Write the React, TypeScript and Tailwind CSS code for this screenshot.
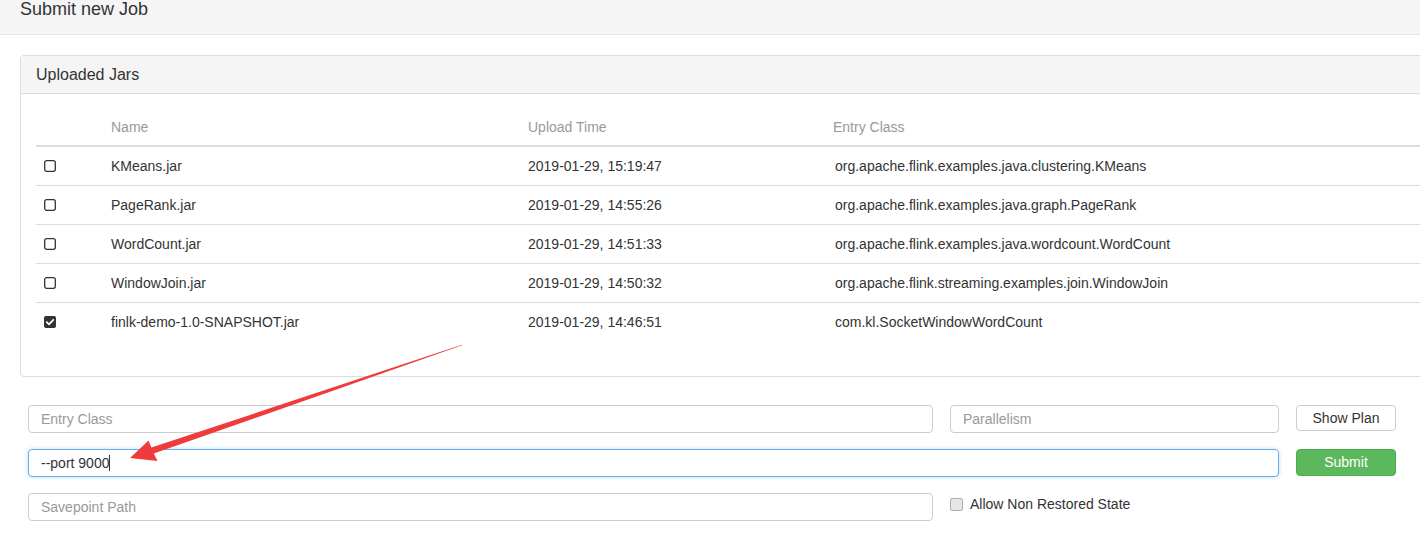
import React from 'react';

const jars = [
  { name: 'KMeans.jar', time: '2019-01-29, 15:19:47', entry: 'org.apache.flink.examples.java.clustering.KMeans', checked: false },
  { name: 'PageRank.jar', time: '2019-01-29, 14:55:26', entry: 'org.apache.flink.examples.java.graph.PageRank', checked: false },
  { name: 'WordCount.jar', time: '2019-01-29, 14:51:33', entry: 'org.apache.flink.examples.java.wordcount.WordCount', checked: false },
  { name: 'WindowJoin.jar', time: '2019-01-29, 14:50:32', entry: 'org.apache.flink.streaming.examples.join.WindowJoin', checked: false },
  { name: 'finlk-demo-1.0-SNAPSHOT.jar', time: '2019-01-29, 14:46:51', entry: 'com.kl.SocketWindowWordCount', checked: true },
];

function SquareCheck({ checked }: { checked: boolean }) {
  if (checked) {
    return (
      <svg width="12" height="12" viewBox="0 0 12 12" className="block">
        <rect x="0" y="0" width="12" height="12" rx="2" fill="#333" />
        <path d="M2.8 6.2 L5 8.3 L9.3 3.9" stroke="#fff" strokeWidth="1.8" fill="none" strokeLinecap="round" strokeLinejoin="round" />
      </svg>
    );
  }
  return (
    <svg width="12" height="12" viewBox="0 0 12 12" className="block">
      <rect x="0.7" y="0.7" width="10.6" height="10.6" rx="2" fill="none" stroke="#333" strokeWidth="1.3" />
    </svg>
  );
}

function Arrow() {
  return (
    <svg className="absolute left-0 top-0 pointer-events-none" width="1420" height="557">
      <polygon
        points="130,458 148.5,440.5 151.4,447.6 461.9,344.7 462.1,345.3 153.8,453.6 157.5,461"
        fill="#ef3b3b"
      />
    </svg>
  );
}

export default function App() {
  return (
    <div className="relative w-[1420px] h-[557px] overflow-hidden bg-white text-[#333] text-[14px] font-['Liberation_Sans',Arial,sans-serif]">
      <div className="h-[35px] bg-[#f5f5f5] border-b border-[#e7e7e7] pl-5">
        <div className="text-[18px] leading-[18px]">Submit new Job</div>
      </div>

      <div className="ml-5 mt-5 w-[1420px] border border-[#ddd] rounded-[4px]">
        <div className="h-[38px] bg-[#f5f5f5] border-b border-[#ddd] flex items-center pl-[15px] text-[16px]">
          Uploaded Jars
        </div>
        <div className="px-[15px] pt-[15px] pb-[35px]">
          <div className="grid grid-cols-[67px_417px_305px_1fr] h-[38px] items-center border-b-2 border-[#ddd] text-[#999] leading-5">
            <div />
            <div className="pl-2">Name</div>
            <div className="pl-2">Upload Time</div>
            <div className="pl-2">Entry Class</div>
          </div>
          {jars.map((j, i) => (
            <div
              key={j.name}
              className={
                'grid grid-cols-[67px_417px_305px_1fr] items-center leading-5 ' +
                (i === 0 ? 'h-[38px]' : 'h-[39px] border-t border-[#ddd]')
              }
            >
              <div className="pl-2">
                <SquareCheck checked={j.checked} />
              </div>
              <div className="pl-2">{j.name}</div>
              <div className="pl-2">{j.time}</div>
              <div className="pl-[10px]">{j.entry}</div>
            </div>
          ))}
        </div>
      </div>

      <div className="ml-[28px] mt-[28px] w-[1368px] flex flex-col gap-4">
        <div className="flex gap-[17px] items-start">
          <div className="w-[905px] h-[28px] border border-[#ccc] rounded-[4px] flex items-center pl-3 text-[#999]">
            Entry Class
          </div>
          <div className="w-[329px] h-[28px] border border-[#ccc] rounded-[4px] flex items-center pl-3 text-[#999]">
            Parallelism
          </div>
          <button className="w-[100px] h-[26px] border border-[#ccc] rounded-[4px] bg-white text-[#333] flex items-center justify-center">
            Show Plan
          </button>
        </div>
        <div className="flex gap-[17px] items-start">
          <div className="w-[1251px] h-[28px] border border-[#66afe9] rounded-[4px] shadow-[0_0_4px_rgba(102,175,233,0.45)] flex items-center pl-3">
            <span>--port 9000</span>
            <span className="w-px h-4 bg-[#333]" />
          </div>
          <button className="w-[100px] h-[27px] border border-[#4cae4c] rounded-[4px] bg-[#5cb85c] text-white flex items-center justify-center">
            Submit
          </button>
        </div>
        <div className="flex gap-[17px] items-start">
          <div className="w-[905px] h-[28px] border border-[#ccc] rounded-[4px] flex items-center pl-3 text-[#999]">
            Savepoint Path
          </div>
          <div className="flex items-center gap-[7px] pt-px leading-5">
            <span className="w-[13px] h-[13px] border border-[#adadad] rounded-[2px] bg-[#e6e6e6]" />
            <span>Allow Non Restored State</span>
          </div>
        </div>
      </div>

      <Arrow />
    </div>
  );
}
